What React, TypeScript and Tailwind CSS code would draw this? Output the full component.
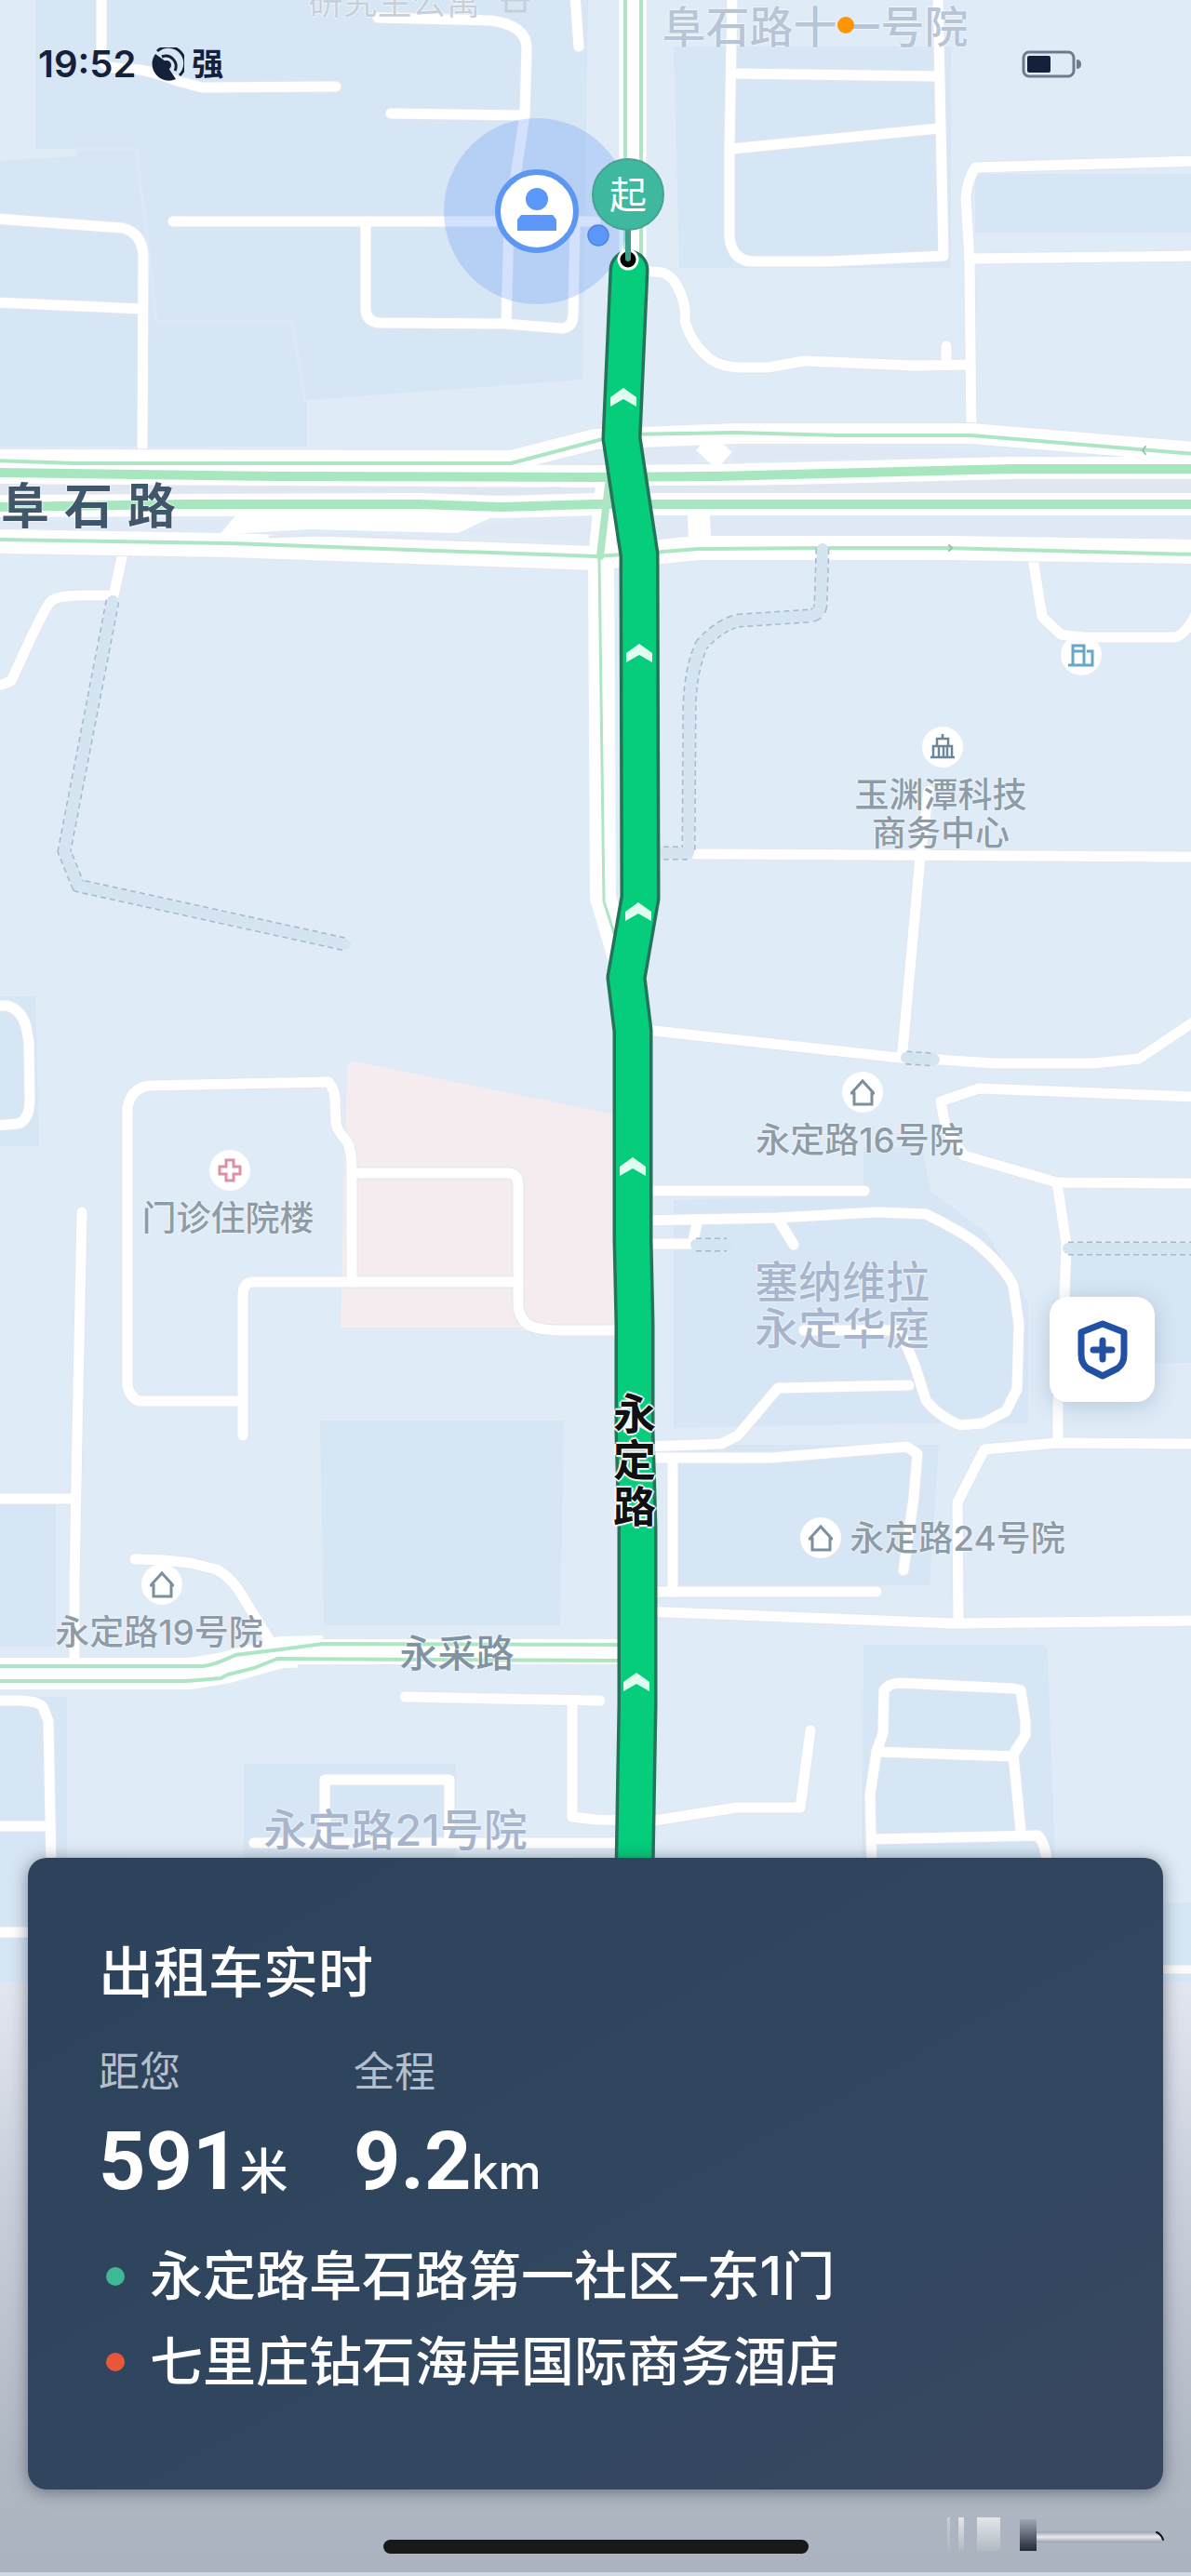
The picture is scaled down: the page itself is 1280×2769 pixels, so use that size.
import type { ReactNode } from "react";

const MAP_WIDTH = 1280;
const MAP_HEIGHT = 2769;

// darker blocks of the base map
const blocks = [
  "M38 0H632L626 408L330 430V480H0V173L82 168V160H38Z",
  "M724 50H1022V288H730Z",
  "M1048 187H1280V250H1048Z",
  "M0 1071H38L42 1232H0Z",
  "M724 1290L928 1285V1233H991L1000 1280L1060 1325L1105 1400V1530H965L724 1535Z",
  "M1150 1340H1280V1465H1150Z",
  "M728 1553H1009L999 1704H728Z",
  "M344 1527H606L602 1747H348Z",
  "M0 1617H60V1770H0Z",
  "M0 1824H72V2131H0Z",
  "M262 1896H490V2000H262Z",
  "M928 1768H1118Q1126 1768 1126 1778L1134 2000H926Z",
  "M1240 2045H1280V2131H1240Z",
];

const streets = [
  "M109 0V58Q109 72 124 73L150 75Q165 77 190 87L217 94L361 93",
  "M406 19L527 22Q566 27 566 52L564 123L554 190",
  "M420 122L564 124",
  "M618 -5L622 50",
  "M186 238H640",
  "M393 238V333Q394 346 408 347L543 348L604 353Q615 352 616 340L618 240",
  "M544 348L547 240",
  "M-5 235L131 245Q153 250 154 275L153 490",
  "M-5 325L153 332",
  "M787 -5L784 157V255Q787 281 810 281H890L1014 275L1008 -5",
  "M787 79L1007 82",
  "M786 160L1009 138",
  "M1285 173L1048 180Q1039 195 1038 213L1042 280L1044 470",
  "M1042 278L1285 275",
  "M690 291L712 293Q722 296 728 308Q738 326 736 345Q744 372 765 387Q776 395 800 395H825L864 388L983 393L1042 392",
  "M1017 372V392",
  "M133 590L122 640L90 640Q62 640 55 646Q48 652 12 732L-4 738",
  "M747 918L1285 921",
  "M998 850L989 921L970 1130",
  "M1110 600L1120 663L1140 682L1164 685H1264Q1276 680 1285 660",
  "M-5 1081H8Q24 1086 28 1104L31 1120L32 1183Q31 1206 18 1208L-5 1210",
  "M257 1506H149Q138 1500 137 1488V1192Q140 1170 160 1167L353 1163Q360 1172 360 1182L361 1207Q362 1215 373 1227Q378 1237 378 1255V1378",
  "M378 1261H547Q557 1262 557 1275V1405Q560 1422 572 1426Q582 1430 605 1430H665",
  "M557 1378H270Q261 1380 261 1392V1543",
  "M88 1303L83 1540L80 1700V1785",
  "M-5 1611H80",
  "M690 1107L703 1108L967 1137L1010 1139L1068 1143H1175L1224 1138L1285 1097",
  "M1285 1179L1052 1170L1011 1184L1017 1215L1036 1242L1136 1271L1285 1272",
  "M1136 1271L1146 1337L1144 1393L1137 1507V1550",
  "M690 1280H929",
  "M690 1312L836 1309L942 1303L995 1305Q1030 1322 1048 1335Q1080 1362 1089 1382L1095 1423L1093 1493L1081 1517L1056 1530L1032 1532Q1008 1522 995 1505L983 1467L967 1430H864",
  "M750 1312L744 1337H690",
  "M837 1312L853 1338",
  "M977 1489L836 1492L793 1543L775 1552L690 1555",
  "M690 1567H828L975 1555L986 1563L982 1610L971 1688",
  "M723 1570V1711",
  "M690 1711H942",
  "M690 1732L1024 1745L1285 1742",
  "M1285 1552L1136 1551L1058 1558L1029 1615L1030 1743",
  "M145 1676L176 1677L204 1680L233 1687Q246 1695 255 1707L294 1770",
  "M-5 1828H24Q42 1829 46 1835L52 1850L55 2005",
  "M-5 1963H52",
  "M-5 2077H40",
  "M435 1824L645 1828",
  "M615 1828V1953L640 1956L703 1957L791 1943H860L871 1860",
  "M349 1981V1913H483V1981",
  "M273 1981H680",
  "M937 2005L935 1930L942 1883L949 1863L950 1817Q954 1810 967 1809L1089 1815L1097 1817L1102 1850V1865L1089 1886L1097 1968",
  "M942 1883L1089 1888",
  "M938 1977L1115 1973Q1123 1980 1125 2000",
];

const footpaths = [
  "M121 646L69 915L84 952L371 1015",
  "M884 590L882 650Q881 661 870 662L795 667Q775 670 754 693Q742 720 741 760L740 917H700",
  "M974 1137L1004 1139",
  "M748 1338H781",
  "M1148 1342H1285",
];

const route =
  "M676 290L668 471L687 596L688 965L673 1051L680 1108V1333L682 1423V1540L685 1643V1833L682 2010";

const chevrons = [
  [670, 427],
  [687, 702],
  [686, 980],
  [680, 1254],
  [684, 1530],
  [684, 1808],
];

type PoiKind = "home" | "hospital" | "office" | "building";

const pois: { kind: PoiKind; x: number; y: number }[] = [
  { kind: "building", x: 1162, y: 704 },
  { kind: "office", x: 1013, y: 803 },
  { kind: "home", x: 927, y: 1174 },
  { kind: "hospital", x: 247, y: 1258 },
  { kind: "home", x: 882, y: 1653 },
  { kind: "home", x: 174, y: 1703 },
];

const poiText = "text-[37px] leading-[41px] font-medium text-[#8e9ca8]";
const areaText = "text-[47px] leading-[50px] font-medium text-[#a8b6cd]";

const labels = [
  { lines: ["研究生公寓"], x: 424, y: 2, style: "text-[37px] leading-[41px] text-[#c6d0db]" },
  { lines: ["阜石路十一号院"], x: 876, y: 29, style: "text-[47px] leading-[50px] font-medium text-[#b8c5d7]" },
  { lines: ["玉渊潭科技", "商务中心"], x: 1011, y: 875, style: poiText },
  { lines: ["永定路16号院"], x: 924, y: 1225, style: poiText },
  { lines: ["门诊住院楼"], x: 245, y: 1309, style: poiText },
  { lines: ["塞纳维拉", "永定华庭"], x: 905, y: 1403, style: areaText },
  { lines: ["永定路24号院"], x: 1029, y: 1653, style: poiText },
  { lines: ["永定路19号院"], x: 171, y: 1754, style: poiText },
  { lines: ["永采路"], x: 491, y: 1777, style: "text-[41px] leading-[44px] font-medium text-[#8093a4]" },
  { lines: ["永定路21号院"], x: 425, y: 1967, style: areaText },
];

function PoiIcon({ kind }: { kind: PoiKind }) {
  if (kind === "hospital") {
    return (
      <path
        d="M-4 -11H4V-4H11V4H4V11H-4V4H-11V-4H-4Z"
        stroke="#dd8fa3"
        strokeWidth="3"
      />
    );
  }
  if (kind === "office") {
    return (
      <path
        d="M0 -14V-10M-6 -1V-9H6V-1M-10 11V-1H10V11M-13 11H13M-4 0V11M1 0V11M5 0V11"
        stroke="#6c8599"
        strokeWidth="2.5"
      />
    );
  }
  if (kind === "building") {
    return (
      <path
        d="M-14 11H4M-9 11V-10H3V11H12V-4H6M-9 -4H3"
        stroke="#67a6cc"
        strokeWidth="3"
      />
    );
  }
  return (
    <path
      d="M-13 1H-9V13H10V1H13M-11 0L0 -12L11 0"
      stroke="#7b8fa0"
      strokeWidth="3"
    />
  );
}

function Strokes({ paths, color, width }: { paths: string[]; color: string; width: number }) {
  return (
    <g stroke={color} strokeWidth={width}>
      {paths.map((d) => (
        <path key={d} d={d} />
      ))}
    </g>
  );
}

function MapDrawing() {
  return (
    <svg
      viewBox={`0 0 ${MAP_WIDTH} ${MAP_HEIGHT}`}
      className="block w-full"
      fill="none"
      strokeLinecap="round"
      strokeLinejoin="round"
      aria-hidden="true"
    >
      <defs>
        <linearGradient id="fade" x1="0" y1="0" x2="0" y2="1">
          <stop offset="0" stopColor="#e2e6ef" />
          <stop offset="0.3" stopColor="#cdd3de" />
          <stop offset="0.8" stopColor="#b0b8c3" />
          <stop offset="1" stopColor="#a9b3bf" />
        </linearGradient>
        <linearGradient id="mark" x1="0" y1="0" x2="0" y2="1">
          <stop offset="0" stopColor="#a0a7b3" />
          <stop offset="1" stopColor="#23283a" />
        </linearGradient>
        <linearGradient id="streak" x1="0" y1="0" x2="0" y2="1">
          <stop offset="0" stopColor="#9a9fac" />
          <stop offset="0.5" stopColor="#e9ebef" />
          <stop offset="1" stopColor="#9aa0ab" />
        </linearGradient>
        <linearGradient id="pale" x1="0" y1="0" x2="0" y2="1">
          <stop offset="0" stopColor="#e3e6ea" />
          <stop offset="1" stopColor="#b2b9c3" />
        </linearGradient>
      </defs>

      <rect width={MAP_WIDTH} height={MAP_HEIGHT} fill="#dfebf7" />
      <g fill="#d7e6f4">
        {blocks.map((d) => (
          <path key={d} d={d} />
        ))}
      </g>
      <path
        d="M82 160H146L155 230L168 346H314L328 430"
        stroke="#dbe9f6"
        strokeWidth="4"
      />
      <path
        d="M373 1150Q373 1140 382 1141L684 1203V1430H560V1427H366Z"
        fill="#f4ecee"
      />

      <Strokes paths={streets} color="#e2e6ef" width={13} />
      <Strokes paths={streets} color="#ffffff" width={11} />

      {/* ring road and its service lanes */}
      <g stroke="#e2e6ef">
        <path d="M-5 494L549 495L640 472L791 466H1044L1285 486" strokeWidth="24" />
        <path d="M-5 525H1285" strokeWidth="54" />
        <path d="M-5 582L245 586L640 600L701 594L750 589L1015 589L1285 593" strokeWidth="28" />
      </g>
      <path d="M690 481L758 478L746 495L694 497ZM795 479H905Q1000 482 1150 491L788 495Z" fill="#dfe9f5" />
      <path
        d="M-5 561H254L236 570L-5 568ZM531 562L636 557L633 584L494 573ZM704 556H1285V577L708 579Z"
        fill="#dfe9f5"
      />
      <g stroke="#ffffff">
        <path d="M-5 494L549 495L640 472L791 466H1044L1285 486" strokeWidth="22" />
        <path d="M-5 508L300 510L640 512L771 511L1089 503H1285" strokeWidth="24" />
        <path d="M-5 544L449 542L539 545L640 542H1285" strokeWidth="24" />
        <path d="M-5 582L245 586L640 600L701 594L750 589L1015 589L1285 593" strokeWidth="26" />
        <path d="M776 476L759 494" strokeWidth="30" strokeLinecap="butt" />
        <path d="M751 552L752 580" strokeWidth="24" />
        <path d="M654 521L646 600L648 965L673 1049" strokeWidth="28" />
        <path d="M680 -5V300" strokeWidth="29" />
        <path d="M-5 1799H204L241 1793L302 1776L345 1775H670" strokeWidth="34" />
      </g>
      <path d="M254 553H535L492 573L330 569L236 575Z" fill="#ffffff" />
      <path d="M290 577L340 575L490 579" stroke="#e2e8f3" strokeWidth="3" />
      <path d="M-5 525H440L530 530L600 525M700 524L1285 522" stroke="#e0e6f0" strokeWidth="4" />
      <path d="M320 1796H670V1789H320ZM347 1762H670V1752H347Z" fill="#dfebf7" />

      <g stroke="#aee5c4">
        <path d="M-5 508L300 512L640 513L771 512L1089 504H1285" stroke="#a7e7c0" strokeWidth="10" />
        <path d="M-5 545L200 542H449L539 545L640 542H1285" stroke="#a7e7c0" strokeWidth="10" />
        <path d="M-5 495L80 498H549L640 474L668 467L791 465L901 468H1044L1285 488" strokeWidth="4" />
        <path d="M-5 580L245 584L640 598L701 594L750 590L885 589H1015L1285 596" strokeWidth="4" />
        <path d="M654 521L645 598" strokeWidth="8" />
        <path d="M644 600L649 969L660 1003" strokeWidth="3" />
        <path d="M672 -5V300M689 -5V300" strokeWidth="4" />
        <path d="M-5 1791H218Q230 1790 253 1779L302 1773L347 1767L670 1768" strokeWidth="4" />
        <path d="M-5 1807H200L237 1804L245 1800L273 1793L298 1783L670 1785" strokeWidth="4" />
      </g>
      <path d="M1231 480L1228 484L1231 488M1020 586L1023 589L1020 592" stroke="#8fc7a9" strokeWidth="2" />

      <g strokeLinecap="butt" strokeDasharray="6 4">
        <Strokes paths={footpaths} color="#a6bacb" width={15} />
      </g>
      <Strokes paths={footpaths} color="#d5e4f1" width={12} />

      <circle cx="577" cy="227" r="100" fill="#6a9df8" fillOpacity="0.3" />

      <path d={route} stroke="#24745a" strokeWidth="43" />
      <path d={route} stroke="#05cd7c" strokeWidth="36" />
      <g fill="#e0fbef">
        {chevrons.map(([x, y]) => (
          <path
            key={y}
            d={`M${x - 14} ${y}L${x} ${y - 10}L${x + 14} ${y}V${y + 10}L${x} ${y + 2}L${x - 14} ${y + 10}Z`}
          />
        ))}
      </g>

      <circle cx="643" cy="253" r="11" fill="#5b96fa" stroke="#4e83e0" strokeWidth="1.5" />
      <circle cx="675" cy="279" r="10" fill="#000000" stroke="#ffffff" strokeWidth="3" />
      <path d="M675 240V278" stroke="#3c9f89" strokeWidth="6" />
      <circle cx="675" cy="209" r="38" fill="#3eb9a0" stroke="#4aa08f" strokeWidth="2" />

      <circle cx="577" cy="227" r="42" fill="#ffffff" stroke="#5c97f2" strokeWidth="6" />
      <circle cx="577" cy="214" r="12" fill="#5c97fa" />
      <path d="M560 231H594L598 236V248H556V236Z" fill="#5c97fa" />

      <path d="M544 -2V12H564V-2M540 0H568" stroke="#c6d0db" strokeWidth="3" />

      {pois.map((poi) => (
        <g key={`${poi.x}-${poi.y}`} transform={`translate(${poi.x} ${poi.y})`} strokeLinecap="butt" strokeLinejoin="miter">
          <circle r="22" fill="#ffffff" />
          <PoiIcon kind={poi.kind} />
        </g>
      ))}

      <rect y="2131" width={MAP_WIDTH} height="638" fill="url(#fade)" />
      <path d="M1250 2117H1285" stroke="#fbfaf8" strokeWidth="9" />
      <path d="M0 2767H1280" stroke="#ccd9e0" strokeWidth="4" />

      <rect x="1018" y="2706" width="3" height="36" fill="url(#pale)" opacity="0.5" />
      <rect x="1030" y="2706" width="6" height="36" fill="url(#pale)" />
      <rect x="1050" y="2706" width="25" height="36" fill="url(#pale)" />
      <rect x="1096" y="2708" width="18" height="34" fill="url(#mark)" />
      <rect x="1114" y="2721" width="134" height="12" fill="url(#streak)" />
      <path d="M1243 2722Q1248 2724 1250 2730" stroke="#101010" strokeWidth="2" />
    </svg>
  );
}

function MapLabel({ x, y, className, children }: { x: number; y: number; className: string; children?: ReactNode }) {
  return (
    <div
      className={`absolute -translate-x-1/2 -translate-y-1/2 whitespace-nowrap text-center ${className}`}
      style={{ left: `${(x / MAP_WIDTH) * 100}%`, top: `${(y / MAP_HEIGHT) * 100}%` }}
    >
      {children}
    </div>
  );
}

function RouteMap() {
  return (
    <div className="relative col-start-1 row-start-1 overflow-hidden">
      <MapDrawing />
      {labels.map((label) => (
        <MapLabel
          key={label.lines[0]}
          x={label.x}
          y={label.y}
          className={`[text-shadow:0_0_2px_#fff,0_0_2px_#fff] ${label.style}`}
        >
          {label.lines.map((line) => (
            <p key={line}>{line}</p>
          ))}
        </MapLabel>
      ))}
      <MapLabel
        x={95}
        y={545}
        className="flex gap-4 text-[52px] leading-[56px] font-bold text-[#40566b] [text-shadow:0_0_2px_#fff,0_0_2px_#fff]"
      >
        <span>阜</span>
        <span>石</span>
        <span>路</span>
      </MapLabel>
      <MapLabel
        x={682}
        y={1569}
        className="flex flex-col text-[46px] leading-[50px] font-bold text-[#111] [text-shadow:0_0_2px_#fff,2px_0_1px_#fff,-2px_0_1px_#fff,0_2px_1px_#fff,0_-2px_1px_#fff]"
      >
        <span>永</span>
        <span>定</span>
        <span>路</span>
      </MapLabel>
      <MapLabel x={675} y={210} className="text-[40px] leading-[44px] text-white">
        起
      </MapLabel>
      <MapLabel x={909} y={27} className="size-[18px] rounded-full bg-[#ff9500]" />
    </div>
  );
}

function StatusBar() {
  return (
    <header className="flex h-[138px] items-center pr-[117px] pl-[41px] text-[#14213a]">
      <span className="text-[40px] leading-[44px] font-semibold">19:52</span>
      <svg viewBox="0 0 36 36" className="ml-4 size-9" fill="none" aria-hidden="true">
        <path d="M5 7A18 18 0 0 0 27 34L19 22A5 5 0 0 0 16 15Z" fill="currentColor" />
        <circle cx="17" cy="19" r="5" fill="currentColor" />
        <path d="M7 4A17 17 0 0 1 31 30" stroke="currentColor" strokeWidth="3" />
        <path d="M12 10A11 11 0 0 1 26 25" stroke="currentColor" strokeWidth="3" />
      </svg>
      <span className="ml-2 text-[34px] leading-[44px] font-bold">强</span>
      <svg viewBox="0 0 65 30" className="ml-auto h-[30px] w-[65px]" fill="none" aria-hidden="true">
        <rect x="2" y="2" width="54" height="26" rx="6" stroke="#6f7a8c" strokeWidth="3" />
        <rect x="6" y="6" width="25" height="18" rx="2" fill="#14213a" />
        <path d="M59 10Q64 10 64 15Q64 20 59 20Z" fill="#6f7a8c" />
      </svg>
    </header>
  );
}

function Stat({ label, value, unit }: { label: string; value: string; unit: string }) {
  return (
    <div className="w-[274px]">
      <dt className="text-[44px] leading-[52px] text-[#b3bfcc]">{label}</dt>
      <dd className="flex h-[148px] items-baseline pt-[18px]">
        <span className="font-['Roboto',sans-serif] text-[88px] leading-[104px] font-bold">
          {value}
        </span>
        <span className="text-[52px] leading-[52px] font-medium">{unit}</span>
      </dd>
    </div>
  );
}

function TripCard() {
  return (
    <section className="mx-[30px] rounded-[20px] bg-linear-to-br from-[#2d435b] via-[#30465f] to-[#38475f] px-[76px] pt-[92px] pb-[91px] text-white shadow-[0_2px_18px_rgba(40,50,70,0.55)]">
      <h1 className="text-[59px] leading-[64px] font-medium">出租车实时</h1>
      <dl className="mt-12 flex">
        <Stat label="距您" value="591" unit="米" />
        <Stat label="全程" value="9.2" unit="km" />
      </dl>
      <ul className="text-[57px] leading-[92px] font-medium">
        <li className="flex items-center">
          <span className="mr-[27px] ml-2 size-5 rounded-full bg-[#3fb896]" />
          永定路阜石路第一社区–东1门
        </li>
        <li className="flex items-center">
          <span className="mr-[27px] ml-2 size-5 rounded-full bg-[#e8573a]" />
          七里庄钻石海岸国际商务酒店
        </li>
      </ul>
    </section>
  );
}

function App() {
  return (
    <div className="grid bg-[#dfebf7] font-['Inter','Noto_Sans_CJK_SC',sans-serif]" lang="zh-CN">
      <RouteMap />
      <div className="relative col-start-1 row-start-1 flex flex-col">
        <StatusBar />
        <button
          type="button"
          aria-label="安全中心"
          className="mt-auto mr-[39px] mb-[490px] flex size-[113px] items-center justify-center self-end rounded-[20px] bg-white shadow-[0_4px_24px_rgba(60,90,130,0.25)]"
        >
          <svg viewBox="0 0 54 64" className="h-16 w-[54px]" fill="none" stroke="#2150a4" strokeWidth="7" strokeLinejoin="round" strokeLinecap="round" aria-hidden="true">
            <path d="M27 4L50 13V37Q50 47 43 52L27 60L11 52Q4 47 4 37V13Z" />
            <path d="M27 22V42M17 32H37" />
          </svg>
        </button>
        <TripCard />
        <div className="flex h-[93px] items-end justify-center pb-6">
          <div className="h-[15px] w-[457px] rounded-full bg-[#191919]" />
        </div>
      </div>
    </div>
  );
}

export default App;
